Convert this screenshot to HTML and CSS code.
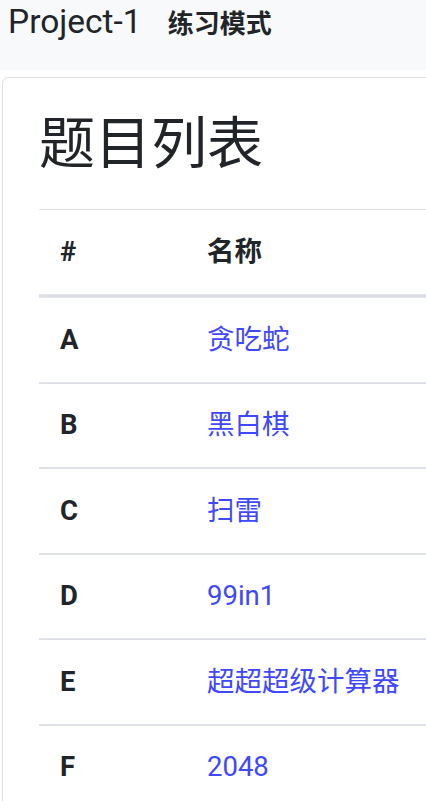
FILE: index.html
```html
<!DOCTYPE html>
<html lang="zh">
<head>
<meta charset="utf-8">
<title>Project-1 练习模式</title>
<link rel="stylesheet" href="styles.css">
</head>
<body>
<div class="page">
  <nav class="navbar">
    <span class="brand">Project-1</span>
    <span class="mode">练习模式</span>
  </nav>
  <main class="container">
    <section class="card">
      <h1 class="title">题目列表</h1>
      <table class="problems">
        <colgroup>
          <col class="col-id-w">
          <col>
        </colgroup>
        <thead>
          <tr><th class="col-id">#</th><th>名称</th></tr>
        </thead>
        <tbody>
          <tr><td class="col-id">A</td><td><a href="#">贪吃蛇</a></td></tr>
          <tr><td class="col-id">B</td><td><a href="#">黑白棋</a></td></tr>
          <tr><td class="col-id">C</td><td><a href="#">扫雷</a></td></tr>
          <tr><td class="col-id">D</td><td><a href="#">99in1</a></td></tr>
          <tr><td class="col-id">E</td><td><a href="#">超超超级计算器</a></td></tr>
          <tr><td class="col-id">F</td><td><a href="#">2048</a></td></tr>
        </tbody>
      </table>
    </section>
  </main>
</div>
</body>
</html>
```

FILE: styles.css
```css
html, body {
  margin: 0;
  padding: 0;
  background: #ffffff;
}
body {
  font-family: Roboto, "Noto Sans CJK SC", sans-serif;
  color: #212529;
}
.page {
  width: 426px;
  height: 801px;
  overflow: hidden;
}
.navbar {
  height: 70px;
  box-sizing: border-box;
  background: #f8f9fa;
  display: flex;
  align-items: baseline;
  padding: 2px 0 0 8px;
  gap: 26px;
}
.brand {
  font-size: 33.5px;
  line-height: 40px;
  font-weight: 400;
}
.mode {
  font-size: 26px;
  line-height: 40px;
  font-weight: 700;
}
.container {
  padding: 7px 0 0 2px;
}
.card {
  width: 700px;
  border: 1px solid #dfdfdf;
  border-radius: 6px;
  padding: 33px 36px;
  box-sizing: border-box;
  background: #fff;
}
.title {
  margin: 0 0 32px 0;
  font-size: 56px;
  line-height: 66px;
  font-weight: 400;
}
.problems {
  width: 100%;
  table-layout: fixed;
  border-collapse: collapse;
  font-size: 27.5px;
  line-height: 40.5px;
}
.problems .col-id-w {
  width: 147px;
}
.problems th,
.problems td {
  text-align: left;
  padding: 21.5px 21px;
  vertical-align: middle;
}
.problems thead th {
  border-top: 1px solid #dee2e6;
  border-bottom: 4px solid #dee2e6;
  font-weight: 700;
  padding-top: 21.75px;
  padding-bottom: 21.75px;
}
.problems tbody td {
  border-bottom: 2px solid #dee2e6;
}
.problems .col-id {
  font-weight: 700;
}
.problems a {
  color: #3f48fb;
  text-decoration: none;
}
```
